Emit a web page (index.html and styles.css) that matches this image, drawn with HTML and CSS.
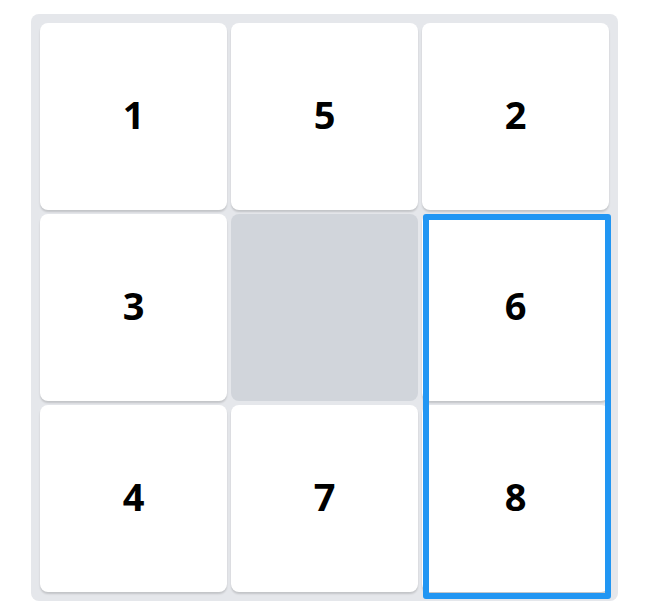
FILE: index.html
```html
<!DOCTYPE html>
<html lang="en">
<head>
    <meta charset="UTF-8">
    <meta name="viewport" content="width=device-width, initial-scale=1.0">
    <title>Sliding Puzzle</title>
    <link rel="stylesheet" href="styles.css">
</head>
<body>

    <div class="board" id="board">
        <div class="tile">1</div>
        <div class="tile">5</div>
        <div class="tile">2</div>
        <div class="tile">3</div>
        <div class="tile empty"></div>
        <div class="tile">6</div>
        <div class="tile">4</div>
        <div class="tile">7</div>
        <div class="tile">8</div>
        <!-- selected column that can slide -->
        <div class="selection"></div>
    </div>

</body>
</html>
```

FILE: styles.css
```css
body {
    margin: 0;
    background: #ffffff;
    font-family: "Open Sans", "Noto Sans", Arial, sans-serif;
}
.board {
    position: relative;
    display: grid;
    grid-template-columns: repeat(3, 187px);
    grid-template-rows: repeat(3, 187px);
    gap: 4px;
    width: max-content;
    margin: 14px 0 0 31px;
    padding: 9px;
    background-color: #e5e7eb;
    border-radius: 8px;
}
.tile {
    display: flex;
    justify-content: center;
    align-items: center;
    padding-bottom: 6px;
    box-sizing: border-box;
    background-color: #ffffff;
    border-radius: 8px;
    box-shadow: 0 2px 2px rgba(0, 0, 0, 0.15);
    font-size: 38px;
    line-height: 1;
    font-weight: 700;
    color: #000000;
}
.tile.empty {
    background-color: #d1d5db;
    box-shadow: none;
}
.selection {
    position: absolute;
    left: 392px;
    top: 200px;
    width: 188px;
    height: 385px;
    box-sizing: border-box;
    border: 6px solid #2196f3;
    border-radius: 3px;
    pointer-events: none;
}
```
